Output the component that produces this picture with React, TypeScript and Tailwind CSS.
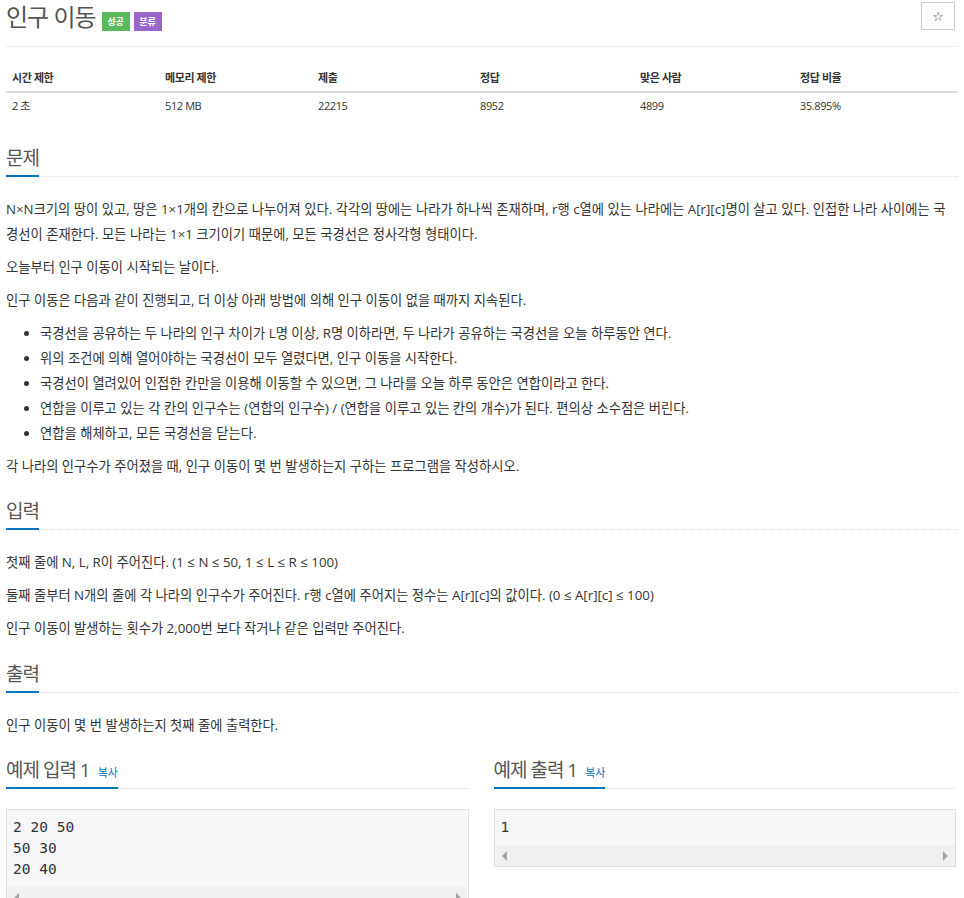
import React from "react";

const FONT = { fontFamily: '"Open Sans", "Noto Sans CJK KR", sans-serif' };

const stats = [
  { head: "시간 제한", value: "2 초" },
  { head: "메모리 제한", value: "512 MB" },
  { head: "제출", value: "22215" },
  { head: "정답", value: "8952" },
  { head: "맞은 사람", value: "4899" },
  { head: "정답 비율", value: "35.895%" },
];

const Headline = ({ children, className = "" }: { children: React.ReactNode; className?: string }) => (
  <div className={`border-b border-dotted border-[#dddddd] ${className}`}>
    <h2 className="inline-block -mb-px border-b-2 border-[#0076c0] pb-[5px] text-[19px] leading-[24px] tracking-[-1px] text-[#555555]">
      {children}
    </h2>
  </div>
);

const ScrollBar = () => (
  <div className="flex h-[21px] items-center justify-between bg-[#f1f1f1] px-[7px]">
    <span className="h-0 w-0 border-y-[5px] border-r-[5px] border-y-transparent border-r-[#a3a3a3]" />
    <span className="h-0 w-0 border-y-[5px] border-l-[5px] border-y-transparent border-l-[#a3a3a3]" />
  </div>
);

const Sample = ({ title, lines }: { title: string; lines: string[] }) => (
  <div className="flex-1">
    <Headline>
      {title}
      <span className="ml-[8px] text-[11px] leading-none tracking-normal text-[#0076c0]">복사</span>
    </Headline>
    <div className="mt-[20px] border border-[#dedee3] bg-[#f7f7f9]">
      <pre
        className="px-[6px] pt-[7px] pb-[7px] text-[14.5px] leading-[21px] text-[#333333]"
        style={{ fontFamily: '"DejaVu Sans Mono", monospace' }}
      >
        {lines.join("\n")}
      </pre>
      <ScrollBar />
    </div>
  </div>
);

export default function App() {
  const p = "mb-[8px]";
  return (
    <div className="min-h-screen bg-white px-[6px] text-[13.3px] leading-[25px] text-[#333333]" style={FONT}>
      <div className="flex items-start justify-between border-b border-[#eeeeee] pb-[12px]">
        <div className="flex items-end gap-[6px]">
          <h1 className="text-[24px] leading-[34px] tracking-[-1px] text-[#555555]">인구 이동</h1>
          <div className="mb-[3px] flex gap-[4px]">
            <span className="flex h-[19px] w-[28px] items-center justify-center bg-[#5cb85c] text-[9px] font-bold text-white">성공</span>
            <span className="flex h-[19px] w-[28px] items-center justify-center bg-[#9b66c9] text-[9px] font-bold text-white">분류</span>
          </div>
        </div>
        <button className="mt-[2px] mr-[3px] flex h-[28px] w-[34px] items-center justify-center border border-[#cccccc] bg-white text-[13px] text-[#333333]" style={{ fontFamily: '"DejaVu Sans", sans-serif' }}>
          ☆
        </button>
      </div>

      <div className="mt-[15px] grid grid-cols-[153px_153px_162px_160px_160px_1fr] text-[11px] leading-[16px] tracking-[-0.4px]">
        {stats.map((s) => (
          <div key={s.head} className="border-b-2 border-[#dddddd] px-[6px] pt-[8px] pb-[5px] font-bold">
            {s.head}
          </div>
        ))}
        {stats.map((s) => (
          <div key={s.value} className="px-[6px] pt-[5px] pb-[5px]">
            {s.value}
          </div>
        ))}
      </div>

      <Headline className="mt-[27px]">문제</Headline>
      <div className="mt-[20px]">
        <p className={p}>
          N×N크기의 땅이 있고, 땅은 1×1개의 칸으로 나누어져 있다. 각각의 땅에는 나라가 하나씩 존재하며, r행 c열에 있는 나라에는 A[r][c]명이 살고 있다. 인접한 나라 사이에는 국<br />
          경선이 존재한다. 모든 나라는 1×1 크기이기 때문에, 모든 국경선은 정사각형 형태이다.
        </p>
        <p className={p}>오늘부터 인구 이동이 시작되는 날이다.</p>
        <p className={p}>인구 이동은 다음과 같이 진행되고, 더 이상 아래 방법에 의해 인구 이동이 없을 때까지 지속된다.</p>
        <ul className="mb-[8px] list-disc pl-[34px]">
          <li>국경선을 공유하는 두 나라의 인구 차이가 L명 이상, R명 이하라면, 두 나라가 공유하는 국경선을 오늘 하루동안 연다.</li>
          <li>위의 조건에 의해 열어야하는 국경선이 모두 열렸다면, 인구 이동을 시작한다.</li>
          <li>국경선이 열려있어 인접한 칸만을 이용해 이동할 수 있으면, 그 나라를 오늘 하루 동안은 연합이라고 한다.</li>
          <li>연합을 이루고 있는 각 칸의 인구수는 (연합의 인구수) / (연합을 이루고 있는 칸의 개수)가 된다. 편의상 소수점은 버린다.</li>
          <li>연합을 해체하고, 모든 국경선을 닫는다.</li>
        </ul>
        <p className={p}>각 나라의 인구수가 주어졌을 때, 인구 이동이 몇 번 발생하는지 구하는 프로그램을 작성하시오.</p>
      </div>

      <Headline className="mt-[20px]">입력</Headline>
      <div className="mt-[20px]">
        <p className={p}>첫째 줄에 N, L, R이 주어진다. (1 ≤ N ≤ 50, 1 ≤ L ≤ R ≤ 100)</p>
        <p className={p}>둘째 줄부터 N개의 줄에 각 나라의 인구수가 주어진다. r행 c열에 주어지는 정수는 A[r][c]의 값이다. (0 ≤ A[r][c] ≤ 100)</p>
        <p className={p}>인구 이동이 발생하는 횟수가 2,000번 보다 작거나 같은 입력만 주어진다.</p>
      </div>

      <Headline className="mt-[21px]">출력</Headline>
      <div className="mt-[20px]">
        <p className={p}>인구 이동이 몇 번 발생하는지 첫째 줄에 출력한다.</p>
      </div>

      <div className="mt-[20px] flex items-start gap-[25px] pr-[2px] pb-[20px]">
        <Sample title="예제 입력 1" lines={["2 20 50", "50 30", "20 40"]} />
        <Sample title="예제 출력 1" lines={["1"]} />
      </div>
    </div>
  );
}
